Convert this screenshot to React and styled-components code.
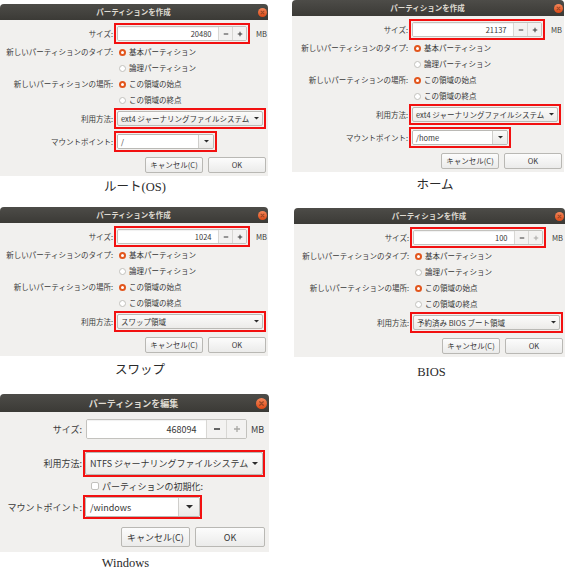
import React from 'react';
import styled, { createGlobalStyle } from 'styled-components';

const GlobalStyle = createGlobalStyle`
  html, body {
    margin: 0;
    padding: 0;
    background: #fff;
  }
  body {
    font-family: "Noto Sans CJK JP", "Noto Sans", sans-serif;
  }
`;

const SMALL = {
  fs: 7.5, titleH: 16, closeD: 9, rowH: 21, radioH: 16, ctrlH: 15, spinW: 13, icon: 6,
  radioD: 7, btnW: 58, btnH: 16, padTop: 3, padBottom: 3, padRight: 2,
};

const BIG = {
  fs: 9, titleH: 18, closeD: 11, ctrlH: 20, spinW: 19, icon: 8,
  btnW: 69, btnH: 20, padRight: 4,
};

const Page = styled.div`
  width: 567px;
  height: 577px;
  overflow: hidden;
  display: flex;
  flex-direction: column;
`;

const FigureRow = styled.div`
  display: flex;
  align-items: flex-start;
  height: ${p => p.$h}px;
  flex-shrink: 0;
`;

const Figure = styled.figure`
  margin: 0 0 0 ${p => p.$ml || 0}px;
  padding-top: ${p => p.$pt || 0}px;
  width: ${p => p.$w}px;
  display: flex;
  flex-direction: column;
`;

const Caption = styled.figcaption`
  font-family: "Liberation Serif", "Noto Sans CJK JP", serif;
  font-size: 12.5px;
  line-height: 16px;
  color: #2a2a2a;
  text-align: center;
  margin-top: ${p => p.$mt}px;
  padding-left: ${p => Math.max(0, p.$shift * 2)}px;
  padding-right: ${p => Math.max(0, -p.$shift * 2)}px;
`;

const Window = styled.div`
  background: #f1f0ee;
  border-radius: 4px 4px 0 0;
  overflow: hidden;
  font-size: ${p => p.$fs}px;
  line-height: 1;
  color: #363636;
`;

const TitleBar = styled.div`
  height: ${p => p.$h}px;
  display: grid;
  grid-template-columns: 1fr auto 1fr;
  align-items: center;
  padding: 0 ${p => p.$pr}px 0 0;
  background: linear-gradient(#4d4c48, #3b3a36);
  color: #dfdbd2;
  font-weight: bold;
`;

const CloseSlot = styled.div`
  justify-self: end;
  display: flex;
`;

const Body = styled.div`
  display: flex;
  flex-direction: column;
  padding: ${p => p.$pt}px ${p => p.$pr}px ${p => p.$pb}px 0;
`;

const FormRow = styled.div`
  display: grid;
  grid-template-columns: ${p => p.$lw}px 1fr;
  column-gap: 1px;
  align-items: center;
  height: ${p => p.$h}px;
  margin-top: ${p => p.$mt || 0}px;
`;

const Label = styled.div`
  display: flex;
  justify-content: flex-end;
  white-space: nowrap;
  color: #3a3a3a;
`;

const Inline = styled.div`
  display: flex;
  align-items: center;
  gap: ${p => p.$gap}px;
`;

const Highlight = styled.div`
  box-sizing: border-box;
  width: ${p => p.$w}px;
  padding: ${p => (p.$pad === undefined ? 1 : p.$pad)}px;
  border: 2px solid ${p => (p.$on ? '#f21010' : 'transparent')};
  display: flex;
`;

const SpinField = styled.div`
  flex: 1;
  display: flex;
  height: ${p => p.$h}px;
  box-sizing: border-box;
  border: 1px solid #c3c2be;
  border-radius: 2px;
  overflow: hidden;
  background: #fff;
`;

const SpinEntry = styled.div`
  flex: 1;
  display: flex;
  align-items: center;
  justify-content: flex-end;
  padding-right: ${p => p.$pr}px;
  background: #fff;
  box-shadow: inset 0 1px 1px rgba(0, 0, 0, 0.06);
`;

const SpinButton = styled.div`
  width: ${p => p.$w}px;
  display: flex;
  align-items: center;
  justify-content: center;
  background: #f3f2f1;
  border-left: 1px solid #d8d7d4;
`;

const Unit = styled.span`
  color: #3a3a3a;
`;

const Combo = styled.div`
  flex: 1;
  height: ${p => p.$h}px;
  box-sizing: border-box;
  display: flex;
  align-items: center;
  justify-content: space-between;
  gap: 2px;
  padding: 0 ${p => p.$padR}px 0 ${p => p.$padL}px;
  border: 1px solid #bab9b5;
  border-radius: 2px;
  background: linear-gradient(#fbfbfa, #ecebe9);
  white-space: nowrap;
`;

const EntryCombo = styled.div`
  flex: 1;
  height: ${p => p.$h}px;
  box-sizing: border-box;
  display: flex;
  border: 1px solid #bab9b5;
  border-radius: 2px;
  overflow: hidden;
`;

const EntryText = styled.div`
  flex: 1;
  display: flex;
  align-items: center;
  padding-left: ${p => p.$pad}px;
  background: #fff;
`;

const ArrowButton = styled.div`
  width: ${p => p.$w}px;
  display: flex;
  align-items: center;
  justify-content: center;
  border-left: 1px solid #cfcecb;
  background: linear-gradient(#fafaf9, #ebeae8);
`;

const Option = styled.div`
  display: flex;
  align-items: center;
  gap: ${p => p.$gap}px;
  padding-left: ${p => p.$indent}px;
  white-space: nowrap;
`;

const RadioMark = styled.span`
  width: ${p => p.$d}px;
  height: ${p => p.$d}px;
  box-sizing: border-box;
  border-radius: 50%;
  background: #fff;
  border: ${p => (p.$checked ? '2px solid #e2561d' : '1px solid #c2c1bd')};
`;

const CheckMark = styled.span`
  width: ${p => p.$d}px;
  height: ${p => p.$d}px;
  box-sizing: border-box;
  border-radius: 2px;
  background: #fff;
  border: 1px solid #c2c1bd;
`;

const ButtonBar = styled.div`
  display: flex;
  justify-content: flex-end;
  gap: 5px;
  margin-top: ${p => p.$mt}px;
`;

const PushButton = styled.div`
  width: ${p => p.$w}px;
  height: ${p => p.$h}px;
  box-sizing: border-box;
  display: flex;
  align-items: center;
  justify-content: center;
  border: 1px solid #b9b8b4;
  border-radius: 2px;
  background: linear-gradient(#fcfcfc, #ebebea);
  color: #363636;
`;

const CloseIcon = ({ d }) => (
  <svg width={d} height={d} viewBox="0 0 10 10">
    <defs>
      <linearGradient id="closeGrad" x1="0" y1="0" x2="0" y2="1">
        <stop offset="0" stopColor="#f4875a" />
        <stop offset="1" stopColor="#dc4a17" />
      </linearGradient>
    </defs>
    <circle cx="5" cy="5" r="5" fill="url(#closeGrad)" />
    <path d="M3.4 3.4L6.6 6.6M6.6 3.4L3.4 6.6" stroke="#5b2a16" strokeWidth="1.2" strokeLinecap="round" opacity="0.55" />
  </svg>
);

const MinusIcon = ({ s, off }) => (
  <svg width={s} height={s} viewBox="0 0 8 8">
    <path d="M1 4h6" stroke={off ? '#a9a8a5' : '#353535'} strokeWidth="1.3" />
  </svg>
);

const PlusIcon = ({ s, off }) => (
  <svg width={s} height={s} viewBox="0 0 8 8">
    <path d="M1 4h6M4 1v6" stroke={off ? '#a9a8a5' : '#353535'} strokeWidth="1.3" />
  </svg>
);

const DownArrow = ({ w }) => (
  <svg width={w} height={w / 2} viewBox="0 0 6 3">
    <path d="M0 0h6L3 3z" fill="#2b2b2b" />
  </svg>
);

const SizeSpin = ({ m, value, plusOff }) => (
  <SpinField $h={m.ctrlH}>
    <SpinEntry $pr={m.spinW * 0.5}>{value}</SpinEntry>
    <SpinButton $w={m.spinW}><MinusIcon s={m.icon} /></SpinButton>
    <SpinButton $w={m.spinW}><PlusIcon s={m.icon} off={plusOff} /></SpinButton>
  </SpinField>
);

const Radio = ({ checked, children }) => (
  <Option $gap={3} $indent={5}>
    <RadioMark $d={SMALL.radioD} $checked={checked} />
    {children}
  </Option>
);

const CreateDialog = ({ labelW, usageW, mountW, size, plusOff, usage, mount }) => {
  const m = SMALL;
  return (
    <Window $fs={m.fs}>
      <TitleBar $h={m.titleH} $pr={1}>
        <span />
        <span>パーティションを作成</span>
        <CloseSlot><CloseIcon d={m.closeD} /></CloseSlot>
      </TitleBar>
      <Body $pt={m.padTop} $pb={m.padBottom} $pr={m.padRight}>
        <FormRow $lw={labelW} $h={m.rowH}>
          <Label>サイズ:</Label>
          <Inline $gap={6}>
            <Highlight $on $w={136}>
              <SizeSpin m={m} value={size} plusOff={plusOff} />
            </Highlight>
            <Unit>MB</Unit>
          </Inline>
        </FormRow>
        <FormRow $lw={labelW} $h={m.radioH}>
          <Label>新しいパーティションのタイプ:</Label>
          <Radio checked>基本パーティション</Radio>
        </FormRow>
        <FormRow $lw={labelW} $h={m.radioH}>
          <span />
          <Radio>論理パーティション</Radio>
        </FormRow>
        <FormRow $lw={labelW} $h={m.radioH}>
          <Label>新しいパーティションの場所:</Label>
          <Radio checked>この領域の始点</Radio>
        </FormRow>
        <FormRow $lw={labelW} $h={m.radioH}>
          <span />
          <Radio>この領域の終点</Radio>
        </FormRow>
        <FormRow $lw={labelW} $h={m.rowH}>
          <Label>利用方法:</Label>
          <Highlight $on $w={usageW}>
            <Combo $h={m.ctrlH} $padL={3} $padR={3}>
              <span>{usage}</span>
              <DownArrow w={5} />
            </Combo>
          </Highlight>
        </FormRow>
        {mount && (
          <FormRow $lw={labelW} $h={m.rowH} $mt={2}>
            <Label>マウントポイント:</Label>
            <Highlight $on $w={mountW}>
              <EntryCombo $h={m.ctrlH}>
                <EntryText $pad={3}>{mount}</EntryText>
                <ArrowButton $w={14}><DownArrow w={5} /></ArrowButton>
              </EntryCombo>
            </Highlight>
          </FormRow>
        )}
        <ButtonBar $mt={5}>
          <PushButton $w={m.btnW} $h={m.btnH}>キャンセル(C)</PushButton>
          <PushButton $w={m.btnW} $h={m.btnH}>OK</PushButton>
        </ButtonBar>
      </Body>
    </Window>
  );
};

const EditDialog = () => {
  const m = BIG;
  const lw = 82;
  return (
    <Window $fs={m.fs}>
      <TitleBar $h={m.titleH} $pr={2}>
        <span />
        <span>パーティションを編集</span>
        <CloseSlot><CloseIcon d={m.closeD} /></CloseSlot>
      </TitleBar>
      <Body $pt={4} $pb={5} $pr={m.padRight}>
        <FormRow $lw={lw} $h={26}>
          <Label>サイズ:</Label>
          <Inline $gap={1}>
            <Highlight $w={167}>
              <SizeSpin m={m} value="468094" plusOff />
            </Highlight>
            <Unit>MB</Unit>
          </Inline>
        </FormRow>
        <FormRow $lw={lw} $h={27} $mt={8}>
          <Label>利用方法:</Label>
          <Highlight $on $w={182} $pad={0}>
            <Combo $h={23} $padL={4} $padR={4}>
              <span>NTFS ジャーナリングファイルシステム</span>
              <DownArrow w={6} />
            </Combo>
          </Highlight>
        </FormRow>
        <FormRow $lw={lw} $h={18}>
          <span />
          <Option $gap={3} $indent={8}>
            <CheckMark $d={8} />
            パーティションの初期化:
          </Option>
        </FormRow>
        <FormRow $lw={lw} $h={24}>
          <Label>マウントポイント:</Label>
          <Highlight $on $w={119} $pad={0}>
            <EntryCombo $h={20}>
              <EntryText $pad={4}>/windows</EntryText>
              <ArrowButton $w={20}><DownArrow w={7} /></ArrowButton>
            </EntryCombo>
          </Highlight>
        </FormRow>
        <ButtonBar $mt={8}>
          <PushButton $w={m.btnW} $h={m.btnH}>キャンセル(C)</PushButton>
          <PushButton $w={70} $h={m.btnH}>OK</PushButton>
        </ButtonBar>
      </Body>
    </Window>
  );
};

const App = () => (
  <Page>
    <GlobalStyle />
    <FigureRow $h={200}>
      <Figure $w={268} $pt={4}>
        <CreateDialog labelW={113} usageW={152} mountW={103} size="20480" usage="ext4 ジャーナリングファイルシステム" mount="/" />
        <Caption $mt={3} $shift={1}>ルート(OS)</Caption>
      </Figure>
      <Figure $w={272} $ml={24} $pt={0}>
        <CreateDialog labelW={116} usageW={152} mountW={102} size="21137" usage="ext4 ジャーナリングファイルシステム" mount="/home" />
        <Caption $mt={5} $shift={7}>ホーム</Caption>
      </Figure>
    </FigureRow>
    <FigureRow $h={190}>
      <Figure $w={268} $pt={7}>
        <CreateDialog labelW={113} usageW={152} size="1024" usage="スワップ領域" />
        <Caption $mt={6} $shift={6}>スワップ</Caption>
      </Figure>
      <Figure $w={271} $ml={26} $pt={8}>
        <CreateDialog labelW={115} usageW={153} size="100" plusOff usage="予約済み BIOS ブート領域" />
        <Caption $mt={7} $shift={2}>BIOS</Caption>
      </Figure>
    </FigureRow>
    <FigureRow $h={187}>
      <Figure $w={269} $pt={4}>
        <EditDialog />
        <Caption $mt={3} $shift={-9}>Windows</Caption>
      </Figure>
    </FigureRow>
  </Page>
);

export default App;
